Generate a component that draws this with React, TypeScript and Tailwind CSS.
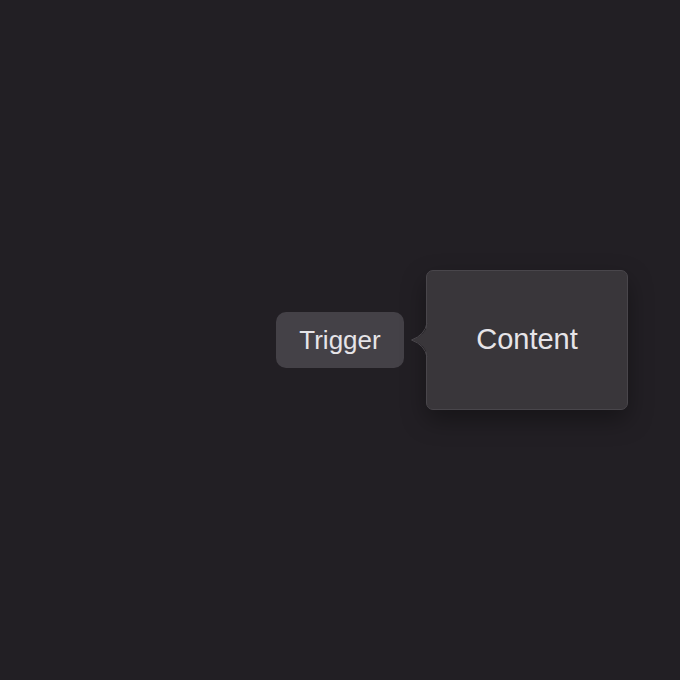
export default function App() {
  return (
    <div className="min-h-screen w-full bg-[#221f24] flex items-center justify-center font-['Liberation_Sans',Arial,sans-serif]">
      <div className="relative">
        <button className="h-[56px] w-[128px] rounded-[10px] bg-[#444147] text-[26px] text-[#e6e4e8]">
          Trigger
        </button>
        <div className="absolute left-[134px] top-1/2 -translate-y-1/2 flex items-center">
          <svg width="18" height="34" viewBox="0 0 18 34" className="-mr-[2px] relative z-10">
            <path d="M18 0 Q16 12 2 17 Q16 22 18 34 Z" fill="#39363a" />
            <path d="M17 0 Q15 12 1.5 17 Q15 22 17 34" fill="none" stroke="#49464b" strokeWidth="1" />
          </svg>
          <div className="h-[140px] w-[202px] rounded-[7px] border border-[#49464b] bg-[#39363a] shadow-[0_10px_25px_rgba(0,0,0,0.35)] flex items-center justify-center text-[29px] text-[#e6e4e8]">
            Content
          </div>
        </div>
      </div>
    </div>
  );
}
